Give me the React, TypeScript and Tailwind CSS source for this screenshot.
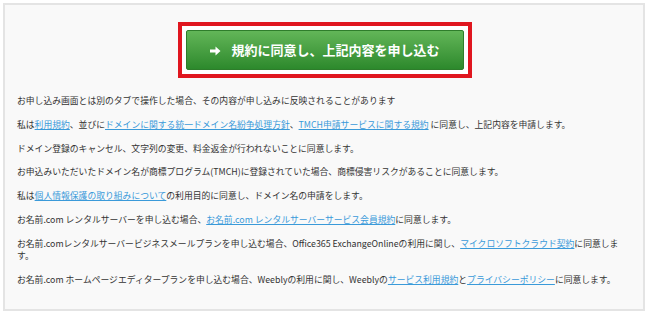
import React from "react";

const A = ({ children }: { children: React.ReactNode }) => (
  <a className="text-[#3a9ad9] underline decoration-[#3a9ad9]">{children}</a>
);

export default function App() {
  return (
    <div className="w-[650px] h-[317px] bg-white p-[3px]" style={{ fontFamily: '"Noto Sans CJK JP", "Noto Sans", sans-serif' }}>
      <div className="h-[308px] w-[642px] border-2 border-[#e4e4e4] bg-[#f9f9f9] pt-[17px] pl-[12px] pr-[10px]">
        <div className="flex justify-center">
          <div className="border-4 border-[#e0161f] bg-white p-[4px]">
            <div className="flex h-[40px] w-[278px] items-center justify-center gap-[10px] rounded-[2px] border border-[#2e7d2b] bg-gradient-to-b from-[#62b658] to-[#2c892c] text-[13px] font-bold text-white">
              <svg width="11" height="10" viewBox="0 0 11 10" className="mt-[1px]">
                <path d="M0 3.5 H5.5 V0.5 L10.5 5 L5.5 9.5 V6.5 H0 Z" fill="white" />
              </svg>
              <span>規約に同意し、上記内容を申し込む</span>
            </div>
          </div>
        </div>
        <div className="mt-[17px] text-[8.8px] leading-[12px] text-[#333]">
          <p className="mb-[11.8px]">お申し込み画面とは別のタブで操作した場合、その内容が申し込みに反映されることがあります</p>
          <p className="mb-[11.8px]">
            私は<A>利用規約</A>、並びに<A>ドメインに関する統一ドメイン名紛争処理方針</A>、<A>TMCH申請サービスに関する規約</A> に同意し、上記内容を申請します。
          </p>
          <p className="mb-[11.8px]">ドメイン登録のキャンセル、文字列の変更、料金返金が行われないことに同意します。</p>
          <p className="mb-[11.8px]">お申込みいただいたドメイン名が商標プログラム(TMCH)に登録されていた場合、商標侵害リスクがあることに同意します。</p>
          <p className="mb-[11.8px]">
            私は<A>個人情報保護の取り組みについて</A>の利用目的に同意し、ドメイン名の申請をします。
          </p>
          <p className="mb-[11.8px]">
            お名前.com レンタルサーバーを申し込む場合、<A>お名前.com レンタルサーバーサービス会員規約</A>に同意します。
          </p>
          <p className="mb-[11.8px]">
            お名前.comレンタルサーバービジネスメールプランを申し込む場合、Office365 ExchangeOnlineの利用に関し、<A>マイクロソフトクラウド契約</A>に同意しま
            <br />す。
          </p>
          <p className="mb-[11.8px]">
            お名前.com ホームページエディタープランを申し込む場合、Weeblyの利用に関し、Weeblyの<A>サービス利用規約</A>と<A>プライバシーポリシー</A>に同意します。
          </p>
        </div>
      </div>
    </div>
  );
}
